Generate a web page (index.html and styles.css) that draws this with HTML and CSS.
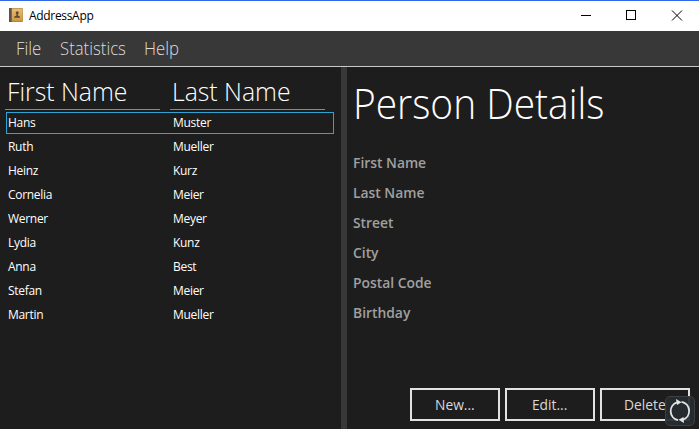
FILE: index.html
```html
<!DOCTYPE html>
<html lang="en">
<head>
<meta charset="utf-8">
<title>AddressApp</title>
<link rel="stylesheet" href="styles.css">
</head>
<body>
<div class="window">
  <header class="titlebar">
    <svg class="app-icon" width="14" height="14" viewBox="0 0 14 14">
      <defs><linearGradient id="cover" x1="0" y1="0" x2="0" y2="1"><stop offset="0" stop-color="#e5bd78"/><stop offset="1" stop-color="#d29a42"/></linearGradient></defs>
      <rect width="14" height="14" rx="1" fill="#b78340"/>
      <rect width="2.600" height="14" rx=".6" fill="#5f524a"/>
      <rect x="3" y=".6" width="10.600" height="12.200" fill="url(#cover)"/>
      <circle cx="8.200" cy="4.800" r="1.500" fill="#5a4a35"/>
      <path d="M7.500 5.500h1.400v2l2.100 1v1.200H5.300V8.500l2.200-1z" fill="#5a4a35"/>
    </svg>
    <span class="app-title">AddressApp</span>
    <svg class="controls" width="102" height="12" viewBox="0 0 102 12" fill="none" stroke="#000" shape-rendering="crispEdges">
      <path d="M0 5.500h10"/>
      <rect x="45.500" y=".5" width="9" height="9"/>
      <path d="M91 .5l10 10M101 .5L91 10.500" shape-rendering="auto"/>
    </svg>
  </header>
  <nav class="menubar"><span class="m-file">File</span><span class="m-stat">Statistics</span><span class="m-help">Help</span></nav>
  <main class="split">
    <section class="people">
      <div class="heads"><div class="head"><span>First Name</span></div><div class="head"><span>Last Name</span></div></div>
      <div class="row selected"><span>Hans</span><span>Muster</span></div>
      <div class="row"><span>Ruth</span><span>Mueller</span></div>
      <div class="row"><span>Heinz</span><span>Kurz</span></div>
      <div class="row"><span>Cornelia</span><span>Meier</span></div>
      <div class="row"><span>Werner</span><span>Meyer</span></div>
      <div class="row"><span>Lydia</span><span>Kunz</span></div>
      <div class="row"><span>Anna</span><span>Best</span></div>
      <div class="row"><span>Stefan</span><span>Meier</span></div>
      <div class="row"><span>Martin</span><span>Mueller</span></div>
    </section>
    <div class="divider"></div>
    <section class="details">
      <h1>Person Details</h1>
      <div class="fields">
        <div>First Name</div><div>Last Name</div><div>Street</div><div>City</div><div>Postal Code</div><div>Birthday</div>
      </div>
      <div class="actions"><button><span>New...</span></button><button><span>Edit...</span></button><button><span>Delete</span></button></div>
    </section>
  </main>
  <div class="sync">
    <svg width="24" height="26" viewBox="0 0 24 26">
      <g fill="none" stroke="#e4e6e6" stroke-width="1.800"><path d="M9 4.300A9.300 9.300 0 0 0 10 22.200"/><path d="M15 21.700A9.300 9.300 0 0 0 13.500 3.800"/></g>
      <path d="M8 1l5.500 3.200L9 7zM16 25l-5.500-3.200L15.500 19z" fill="#e4e6e6"/>
    </svg>
  </div>
</div>
</body>
</html>
```
FILE: styles.css
```css
* { box-sizing: border-box; }
body { margin: 0; background: #1d1d1d; font-family: "Open Sans", "Noto Sans", sans-serif; overflow: hidden; }
.window { position: relative; width: 699px; height: 429px; display: flex; flex-direction: column; background: #1d1d1d; }
.titlebar { height: 31px; border-top: 1px solid #3369e8; background: #fff; display: flex; align-items: center; padding: 0 16px 0 9px; }
.app-icon { margin: -2px 6px 0 0; }
.app-title { flex: 1; font-size: 12px; line-height: 16px; color: #000; letter-spacing: -.32px; }
.menubar { height: 36px; background: #383838; border-bottom: 1px solid #c5cac5; display: flex; padding-left: 16px; font-size: 18.500px; font-weight: 300; line-height: 34px; color: #dedede; }
.menubar span { transform: scaleX(.905); transform-origin: left; }
.m-file { width: 44px; }
.m-stat { width: 84px; }
.split { flex: 1; display: flex; min-height: 0; }
.people { width: 341px; padding-left: 5px; }
.heads { display: flex; gap: 10px; height: 43px; margin-bottom: 2px; }
.head { width: 155px; border-bottom: 1px solid #8b8786; padding-left: 2px; font-size: 26.500px; font-weight: 300; line-height: 49px; color: #fff; white-space: nowrap; }
.head span { display: inline-block; transform: scaleX(.935); transform-origin: left; }
.row { height: 24px; width: 328px; margin-left: 1px; padding: 0 0 1px 2px; display: flex; align-items: center; font-size: 12px; line-height: 17px; color: #fff; letter-spacing: -.3px; }
.row span { width: 165px; flex: none; }
.row.selected { height: 22px; margin-bottom: 1px; border: 1px solid #2fa4d2; padding-left: 1px; }
.divider { width: 6px; background: #383838; }
.details { flex: 1; display: flex; flex-direction: column; padding: 0 9px 8px 6px; }
h1 { margin: 0; height: 81px; font-size: 42.500px; font-weight: 300; line-height: 72px; color: #fff; white-space: nowrap; transform: scaleX(.915); transform-origin: left; }
.fields { font-size: 14.500px; font-weight: 600; line-height: 30px; color: #a0a0a0; transform: scaleX(.955); transform-origin: left; }
.actions { margin-top: auto; display: flex; justify-content: flex-end; gap: 5px; }
button { width: 90px; height: 33px; padding: 0; border: 2px solid #e2e2e2; background: #1d1d1d; color: #d8d8d8; font: 14.500px "Open Sans", sans-serif; }
button span { display: inline-block; transform: scaleX(.95); }
.sync { position: absolute; left: 665px; top: 396px; width: 30px; height: 30px; border: 1px solid #3c4043; border-radius: 5px; background: rgba(38, 44, 48, .93); display: flex; align-items: center; justify-content: center; }
```
